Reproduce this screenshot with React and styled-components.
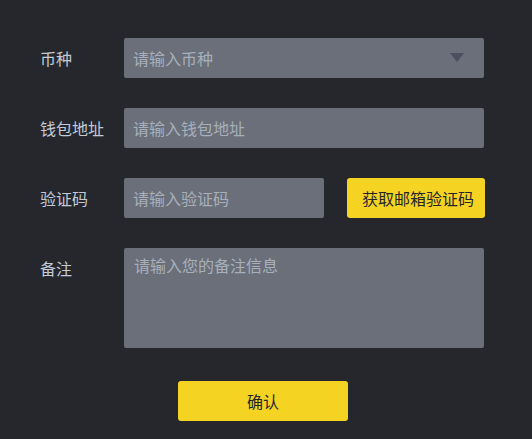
import React from 'react'
import styled, { createGlobalStyle } from 'styled-components'

const GlobalStyle = createGlobalStyle`
  html, body {
    margin: 0;
    padding: 0;
    background: #26272d;
  }
  body {
    font-family: "Noto Sans CJK SC", "Noto Sans", sans-serif;
  }
  * {
    box-sizing: border-box;
  }
`

const Page = styled.div`
  width: 532px;
  height: 439px;
  background: #26272d;
  padding: 38px 48px 0 40px;
`

const Form = styled.form`
  display: flex;
  flex-direction: column;
  gap: 30px;
`

const Row = styled.div`
  display: grid;
  grid-template-columns: 84px 1fr;
  align-items: ${(p) => (p.$top ? 'start' : 'center')};
`

const Label = styled.label`
  color: #c3cad6;
  font-size: 16px;
  line-height: 40px;
  height: 40px;
`

const Field = styled.div`
  position: relative;
  display: flex;
  gap: 23px;
`

const Input = styled.input`
  width: ${(p) => p.$width || '100%'};
  height: 40px;
  border: none;
  border-radius: 2px;
  background: #6a6f7a;
  color: #e6e8ec;
  padding: 0 9px;
  font-family: inherit;
  font-size: 16px;
  outline: none;

  &::placeholder {
    color: #a8afba;
  }
`

const TextArea = styled.textarea`
  width: 100%;
  height: 100px;
  border: none;
  border-radius: 2px;
  background: #6a6f7a;
  color: #e6e8ec;
  padding: 6px 10px;
  font-family: inherit;
  font-size: 16px;
  line-height: 22px;
  resize: none;
  outline: none;

  &::placeholder {
    color: #a8afba;
  }
`

const Caret = styled.svg`
  position: absolute;
  right: 20px;
  top: 15px;
`

const CodeButton = styled.button`
  width: 138px;
  height: 40px;
  border: none;
  border-radius: 3px;
  background: #f5d322;
  color: #25262b;
  font-family: inherit;
  font-size: 16px;
  padding: 0 0 0 4px;
  cursor: pointer;
  white-space: nowrap;
`

const Footer = styled.div`
  display: flex;
  padding: 33px 0 0 138px;
`

const SubmitButton = styled.button`
  width: 170px;
  height: 40px;
  border: none;
  border-radius: 3px;
  background: #f5d322;
  color: #25262b;
  font-family: inherit;
  font-size: 16px;
  cursor: pointer;
`

const App = () => {
  return (
    <Page>
      <GlobalStyle />
      <Form onSubmit={(e) => e.preventDefault()}>
        <Row>
          <Label>币种</Label>
          <Field>
            <Input placeholder='请输入币种' readOnly />
            <Caret width='14' height='10' viewBox='0 0 14 10'>
              <path d='M0 0 H14 L7 9 Z' fill='#4a5060' />
            </Caret>
          </Field>
        </Row>
        <Row>
          <Label>钱包地址</Label>
          <Field>
            <Input placeholder='请输入钱包地址' />
          </Field>
        </Row>
        <Row>
          <Label>验证码</Label>
          <Field>
            <Input placeholder='请输入验证码' $width='200px' />
            <CodeButton type='button'>获取邮箱验证码</CodeButton>
          </Field>
        </Row>
        <Row $top>
          <Label>备注</Label>
          <Field>
            <TextArea placeholder='请输入您的备注信息' />
          </Field>
        </Row>
      </Form>
      <Footer>
        <SubmitButton type='submit'>确认</SubmitButton>
      </Footer>
    </Page>
  )
}

export default App
